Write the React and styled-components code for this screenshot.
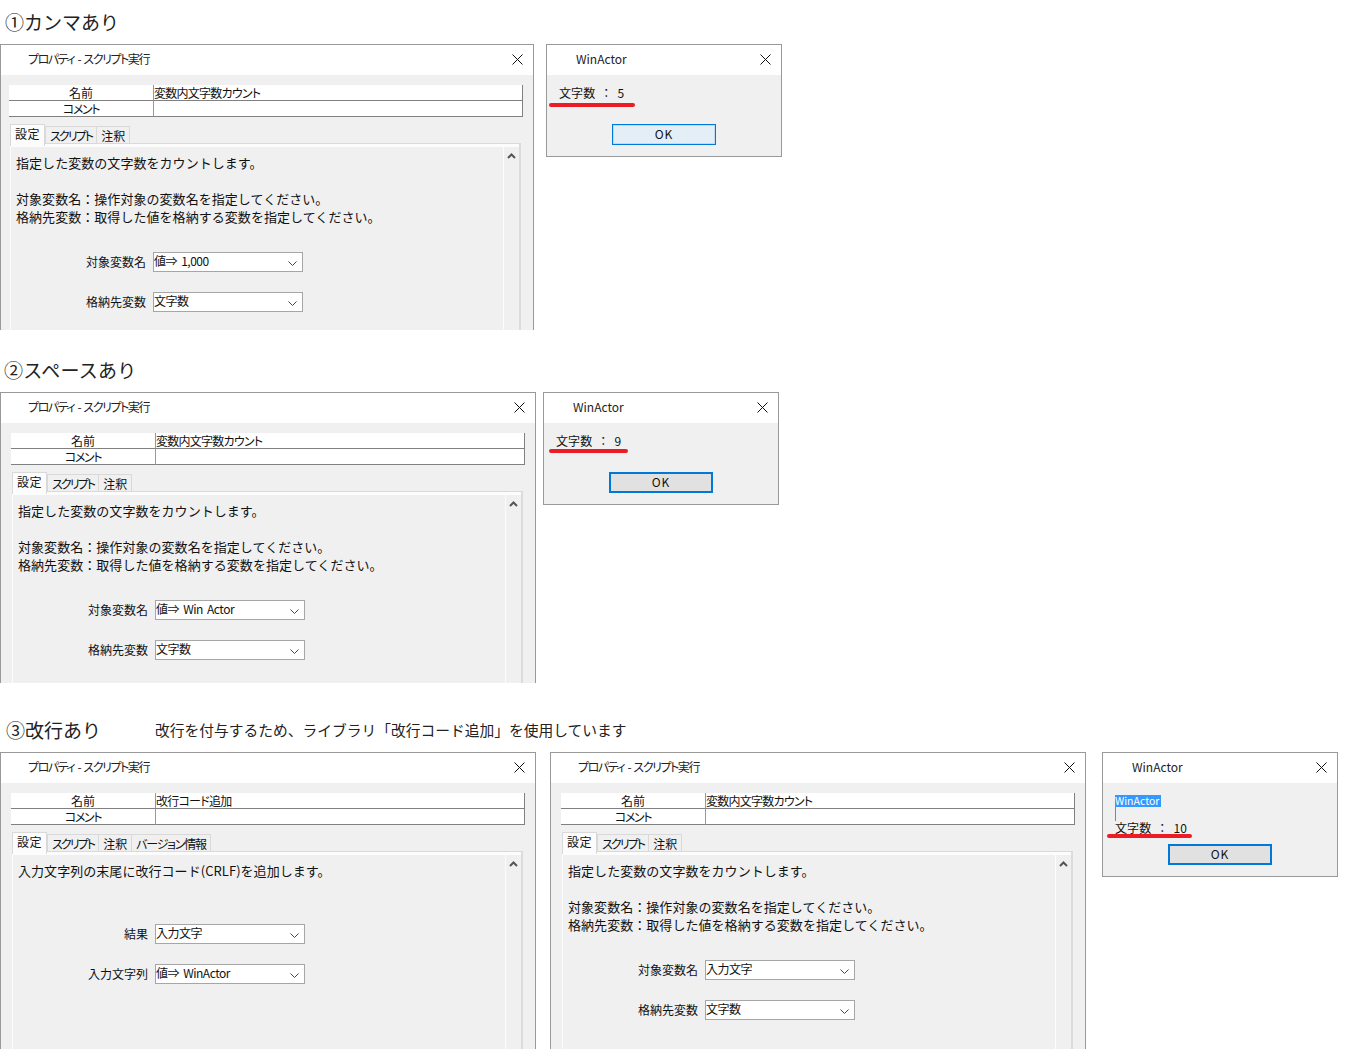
import React from "react";
import styled, { createGlobalStyle } from "styled-components";

const GlobalStyle = createGlobalStyle`
  html, body {
    margin: 0;
    padding: 0;
    background: #fff;
  }
  body {
    font-family: "Noto Sans CJK JP", "Noto Sans", sans-serif;
    color: #111;
  }
`;

const Page = styled.div`
  width: 1353px;
  height: 1062px;
  overflow: hidden;
`;

const HeadingRow = styled.div`
  display: flex;
  align-items: center;
  height: ${(p) => p.$height}px;
  padding: ${(p) => p.$top}px 0 0 ${(p) => p.$left}px;
  box-sizing: border-box;
`;

const Heading = styled.h2`
  margin: 0;
  font-size: 19px;
  font-weight: 400;
  line-height: 28px;
  letter-spacing: ${(p) => p.$spacing || 0}px;
  color: #222;
`;

const Note = styled.span`
  margin: 0 0 0 54px;
  font-size: 14.75px;
  line-height: 22px;
  color: #222;
`;

const WindowRow = styled.div`
  display: flex;
  align-items: flex-start;
`;

const Frame = styled.div`
  flex: none;
  box-sizing: border-box;
  width: ${(p) => p.$width}px;
  height: ${(p) => p.$height}px;
  margin-left: ${(p) => p.$gap || 0}px;
  border: 1px solid #999;
  border-bottom: ${(p) => (p.$clipped ? "none" : "1px solid #999")};
  background: #f0f0f0;
  overflow: hidden;
  position: relative;
`;

const TitleBar = styled.div`
  box-sizing: border-box;
  display: flex;
  align-items: center;
  justify-content: space-between;
  height: 30px;
  background: #fff;
  padding: 0 10px 2px ${(p) => p.$left}px;
`;

const TitleText = styled.span`
  margin-top: -2px;
  font-size: 12px;
  font-feature-settings: "palt";
  letter-spacing: ${(p) => p.$spacing || 0}px;
  word-spacing: ${(p) => (p.$spacing ? 2 : 0)}px;
  white-space: pre;
  color: #222;
`;

const CloseIcon = () => (
  <svg width="11" height="11" viewBox="0 0 11 11">
    <path d="M.5.5l10 10M10.5.5l-10 10" stroke="#111" strokeWidth="1" fill="none" />
  </svg>
);

const Body = styled.div`
  padding: 10px 10px 0 ${(p) => p.$inset}px;
`;

const NameGrid = styled.div`
  display: grid;
  grid-template-columns: 144px 1fr;
  grid-auto-rows: 16px;
  background: #fff;
  border-right: 1px solid #808080;
`;

const NameLabel = styled.div`
  font-size: 12px;
  line-height: 15px;
  text-align: center;
  font-feature-settings: "palt";
  letter-spacing: ${(p) => p.$spacing || 0}px;
  border-bottom: 1px solid #808080;
  overflow: hidden;
`;

const NameValue = styled.div`
  font-size: 12px;
  line-height: 15px;
  font-feature-settings: "palt";
  letter-spacing: -0.75px;
  border-left: 1px solid #999;
  border-bottom: 1px solid #808080;
  overflow: hidden;
  white-space: nowrap;
`;

const TabStrip = styled.div`
  display: flex;
  align-items: flex-end;
  height: 19px;
  margin: 7px 0 0 1px;
`;

const Tab = styled.div`
  box-sizing: border-box;
  height: ${(p) => (p.$active ? 22 : 17)}px;
  padding: 0 4px;
  margin-bottom: ${(p) => (p.$active ? -3 : 0)}px;
  margin-right: ${(p) => (p.$active ? 0 : -1)}px;
  position: relative;
  z-index: ${(p) => (p.$active ? 1 : 0)};
  font-size: 12px;
  font-feature-settings: "palt";
  line-height: ${(p) => (p.$active ? 18 : 17)}px;
  letter-spacing: ${(p) => p.$spacing}px;
  background: ${(p) => (p.$active ? "#fcfcfc" : "#f0f0f0")};
  border: 1px solid #d9d9d9;
  border-bottom: none;
  white-space: nowrap;
`;

const Panel = styled.div`
  display: flex;
  box-sizing: border-box;
  width: 511px;
  height: 400px;
  margin-left: 1px;
  padding: 3px 0 0 1px;
  background: #fcfcfc;
  border-top: 1px solid #d9d9d9;
  border-right: 2px solid #dcdcdc;
`;

const PanelMain = styled.div`
  flex: none;
  box-sizing: border-box;
  width: 493px;
  padding: 7px 0 0 5px;
  background: #f0f0f0;
  border-right: 1px solid #fcfcfc;
`;

const Scrollbar = styled.div`
  flex: 1;
  display: flex;
  justify-content: center;
  align-items: flex-start;
  padding: 6px 1px 0 0;
  background: #f0f0f0;
`;

const Description = styled.div`
  font-size: 13px;
  line-height: 18px;
  letter-spacing: 0.05px;
  color: #111;
  white-space: nowrap;
`;

const Form = styled.div`
  display: grid;
  grid-template-columns: 130px 150px;
  grid-auto-rows: 20px;
  column-gap: 7px;
  row-gap: 20px;
  margin-top: 26px;
`;

const FieldLabel = styled.div`
  font-size: 12px;
  line-height: 20px;
  text-align: right;
  color: #111;
`;

const Select = styled.div`
  box-sizing: border-box;
  display: flex;
  align-items: center;
  justify-content: space-between;
  height: 20px;
  padding: 0 5px 0 0;
  background: #fff;
  border: 1px solid #a6a6a6;
  font-size: 12px;
  line-height: 16px;
  letter-spacing: -0.5px;
  word-spacing: 2px;
  white-space: nowrap;
`;

const SelectValue = styled.span`
  margin-top: -2px;
`;

const Message = styled.div`
  padding: ${(p) => p.$top}px 0 0 12px;
  height: 100%;
  font-size: 12px;
  line-height: 18px;
`;

const MessageLine = styled.div`
  display: flex;
  gap: 5px;
  letter-spacing: 0.1px;
  white-space: nowrap;
`;

const Selected = styled.div`
  width: 46px;
  height: 12px;
  line-height: 12px;
  font-size: 10.5px;
  background: #3399ff;
  color: #fff;
  white-space: nowrap;
`;

const SelectedBreak = styled.div`
  width: 1px;
  height: 14px;
  margin-bottom: -2px;
  background: #3399ff;
`;

const RedLine = styled.div`
  position: absolute;
  left: ${(p) => p.$left}px;
  top: ${(p) => p.$top}px;
  width: ${(p) => p.$width}px;
  height: 4px;
  border-radius: 2px;
  background: #ed1c24;
`;

const OkButton = styled.div`
  box-sizing: border-box;
  width: 104px;
  height: 21px;
  margin: ${(p) => p.$top}px 0 0 ${(p) => p.$left}px;
  border: ${(p) => (p.$focused ? 2 : 1)}px solid #0078d7;
  background: ${(p) => (p.$focused ? "#e1e1e1" : "#e3eef7")};
  box-shadow: ${(p) => (p.$focused ? "none" : "inset 0 0 0 1px #c0daf1")};
  font-size: 12px;
  line-height: ${(p) => (p.$focused ? 16 : 18)}px;
  letter-spacing: 1px;
  text-align: center;
`;

const Chevron = () => (
  <svg width="9" height="6" viewBox="0 0 9 6" style={{ flex: "none", marginTop: 4 }}>
    <path d="M.5.5l4 4 4-4" stroke="#444" strokeWidth="1" fill="none" />
  </svg>
);

const ScrollUp = () => (
  <svg width="9" height="6" viewBox="0 0 9 6">
    <path d="M1 5l3.5-3.5L8 5" stroke="#555" strokeWidth="2" fill="none" />
  </svg>
);

const PropertyWindow = ({ width, height, gap, inset, name, tabs, lines, fields }) => (
  <Frame $width={width} $height={height} $gap={gap} $clipped>
    <TitleBar $left={27}>
      <TitleText $spacing={-1.45}>プロパティ - スクリプト実行</TitleText>
      <CloseIcon />
    </TitleBar>
    <Body $inset={inset}>
      <NameGrid>
        <NameLabel>名前</NameLabel>
        <NameValue>{name}</NameValue>
        <NameLabel $spacing={-1.4}>コメント</NameLabel>
        <NameValue />
      </NameGrid>
      <TabStrip>
        {tabs.map(([tab, spacing], i) => (
          <Tab key={tab} $active={i === 0} $spacing={spacing}>
            {tab}
          </Tab>
        ))}
      </TabStrip>
      <Panel>
        <PanelMain>
          <Description>
            {lines.map((line, i) => (
              <div key={i}>{line || "\u00a0"}</div>
            ))}
          </Description>
          <Form>
            {fields.map(([label, value]) => (
              <React.Fragment key={label}>
                <FieldLabel>{label}</FieldLabel>
                <Select>
                  <SelectValue>{value}</SelectValue>
                  <Chevron />
                </Select>
              </React.Fragment>
            ))}
          </Form>
        </PanelMain>
        <Scrollbar>
          <ScrollUp />
        </Scrollbar>
      </Panel>
    </Body>
  </Frame>
);

const MessageBox = ({ height, gap, top, value, selected, redLeft, redTop, redWidth, btnTop, btnLeft, focused }) => (
  <Frame $width={236} $height={height} $gap={gap}>
    <TitleBar $left={29}>
      <TitleText>WinActor</TitleText>
      <CloseIcon />
    </TitleBar>
    <Message $top={top}>
      {selected && (
        <>
          <Selected>WinActor</Selected>
          <SelectedBreak />
        </>
      )}
      <MessageLine>
        <span>文字数</span>
        <span>：</span>
        <span>{value}</span>
      </MessageLine>
      <OkButton $top={btnTop} $left={btnLeft} $focused={focused}>
        OK
      </OkButton>
    </Message>
    <RedLine $left={redLeft} $top={redTop} $width={redWidth} />
  </Frame>
);

const mainTabs = [
  ["設定", 0.5],
  ["スクリプト", -1.9],
  ["注釈", 0],
];
const countLines = [
  "指定した変数の文字数をカウントします。",
  "",
  "対象変数名：操作対象の変数名を指定してください。",
  "格納先変数：取得した値を格納する変数を指定してください。",
];

export default function App() {
  return (
    <Page>
      <GlobalStyle />
      <HeadingRow $height={44} $top={0} $left={5}>
        <Heading>①カンマあり</Heading>
      </HeadingRow>
      <WindowRow>
        <PropertyWindow
          width={534}
          height={286}
          inset={8}
          name="変数内文字数カウント"
          tabs={mainTabs}
          lines={countLines}
          fields={[
            ["対象変数名", "値⇒ 1,000"],
            ["格納先変数", "文字数"],
          ]}
        />
        <MessageBox
          height={113}
          gap={12}
          top={9}
          value="5"
          redLeft={2}
          redTop={58}
          redWidth={86}
          btnTop={22}
          btnLeft={53}
        />
      </WindowRow>
      <HeadingRow $height={62} $top={18} $left={4}>
        <Heading $spacing={0.25}>②スペースあり</Heading>
      </HeadingRow>
      <WindowRow>
        <PropertyWindow
          width={536}
          height={291}
          inset={10}
          name="変数内文字数カウント"
          tabs={mainTabs}
          lines={countLines}
          fields={[
            ["対象変数名", "値⇒ Win Actor"],
            ["格納先変数", "文字数"],
          ]}
        />
        <MessageBox
          height={113}
          gap={7}
          top={9}
          value="9"
          redLeft={5}
          redTop={56}
          redWidth={79}
          btnTop={22}
          btnLeft={53}
          focused
        />
      </WindowRow>
      <HeadingRow $height={69} $top={25} $left={6}>
        <Heading>③改行あり</Heading>
        <Note>改行を付与するため、ライブラリ「改行コード追加」を使用しています</Note>
      </HeadingRow>
      <WindowRow>
        <PropertyWindow
          width={536}
          height={297}
          inset={10}
          name="改行コード追加"
          tabs={[...mainTabs, ["バージョン情報", -1.25]]}
          lines={["入力文字列の末尾に改行コード(CRLF)を追加します。", ""]}
          fields={[
            ["結果", "入力文字"],
            ["入力文字列", "値⇒ WinActor"],
          ]}
        />
        <PropertyWindow
          width={536}
          height={297}
          gap={14}
          inset={10}
          name="変数内文字数カウント"
          tabs={mainTabs}
          lines={countLines}
          fields={[
            ["対象変数名", "入力文字"],
            ["格納先変数", "文字数"],
          ]}
        />
        <MessageBox
          height={125}
          gap={16}
          top={12}
          value="10"
          selected
          redLeft={4}
          redTop={81}
          redWidth={85}
          btnTop={7}
          btnLeft={53}
          focused
        />
      </WindowRow>
    </Page>
  );
}
